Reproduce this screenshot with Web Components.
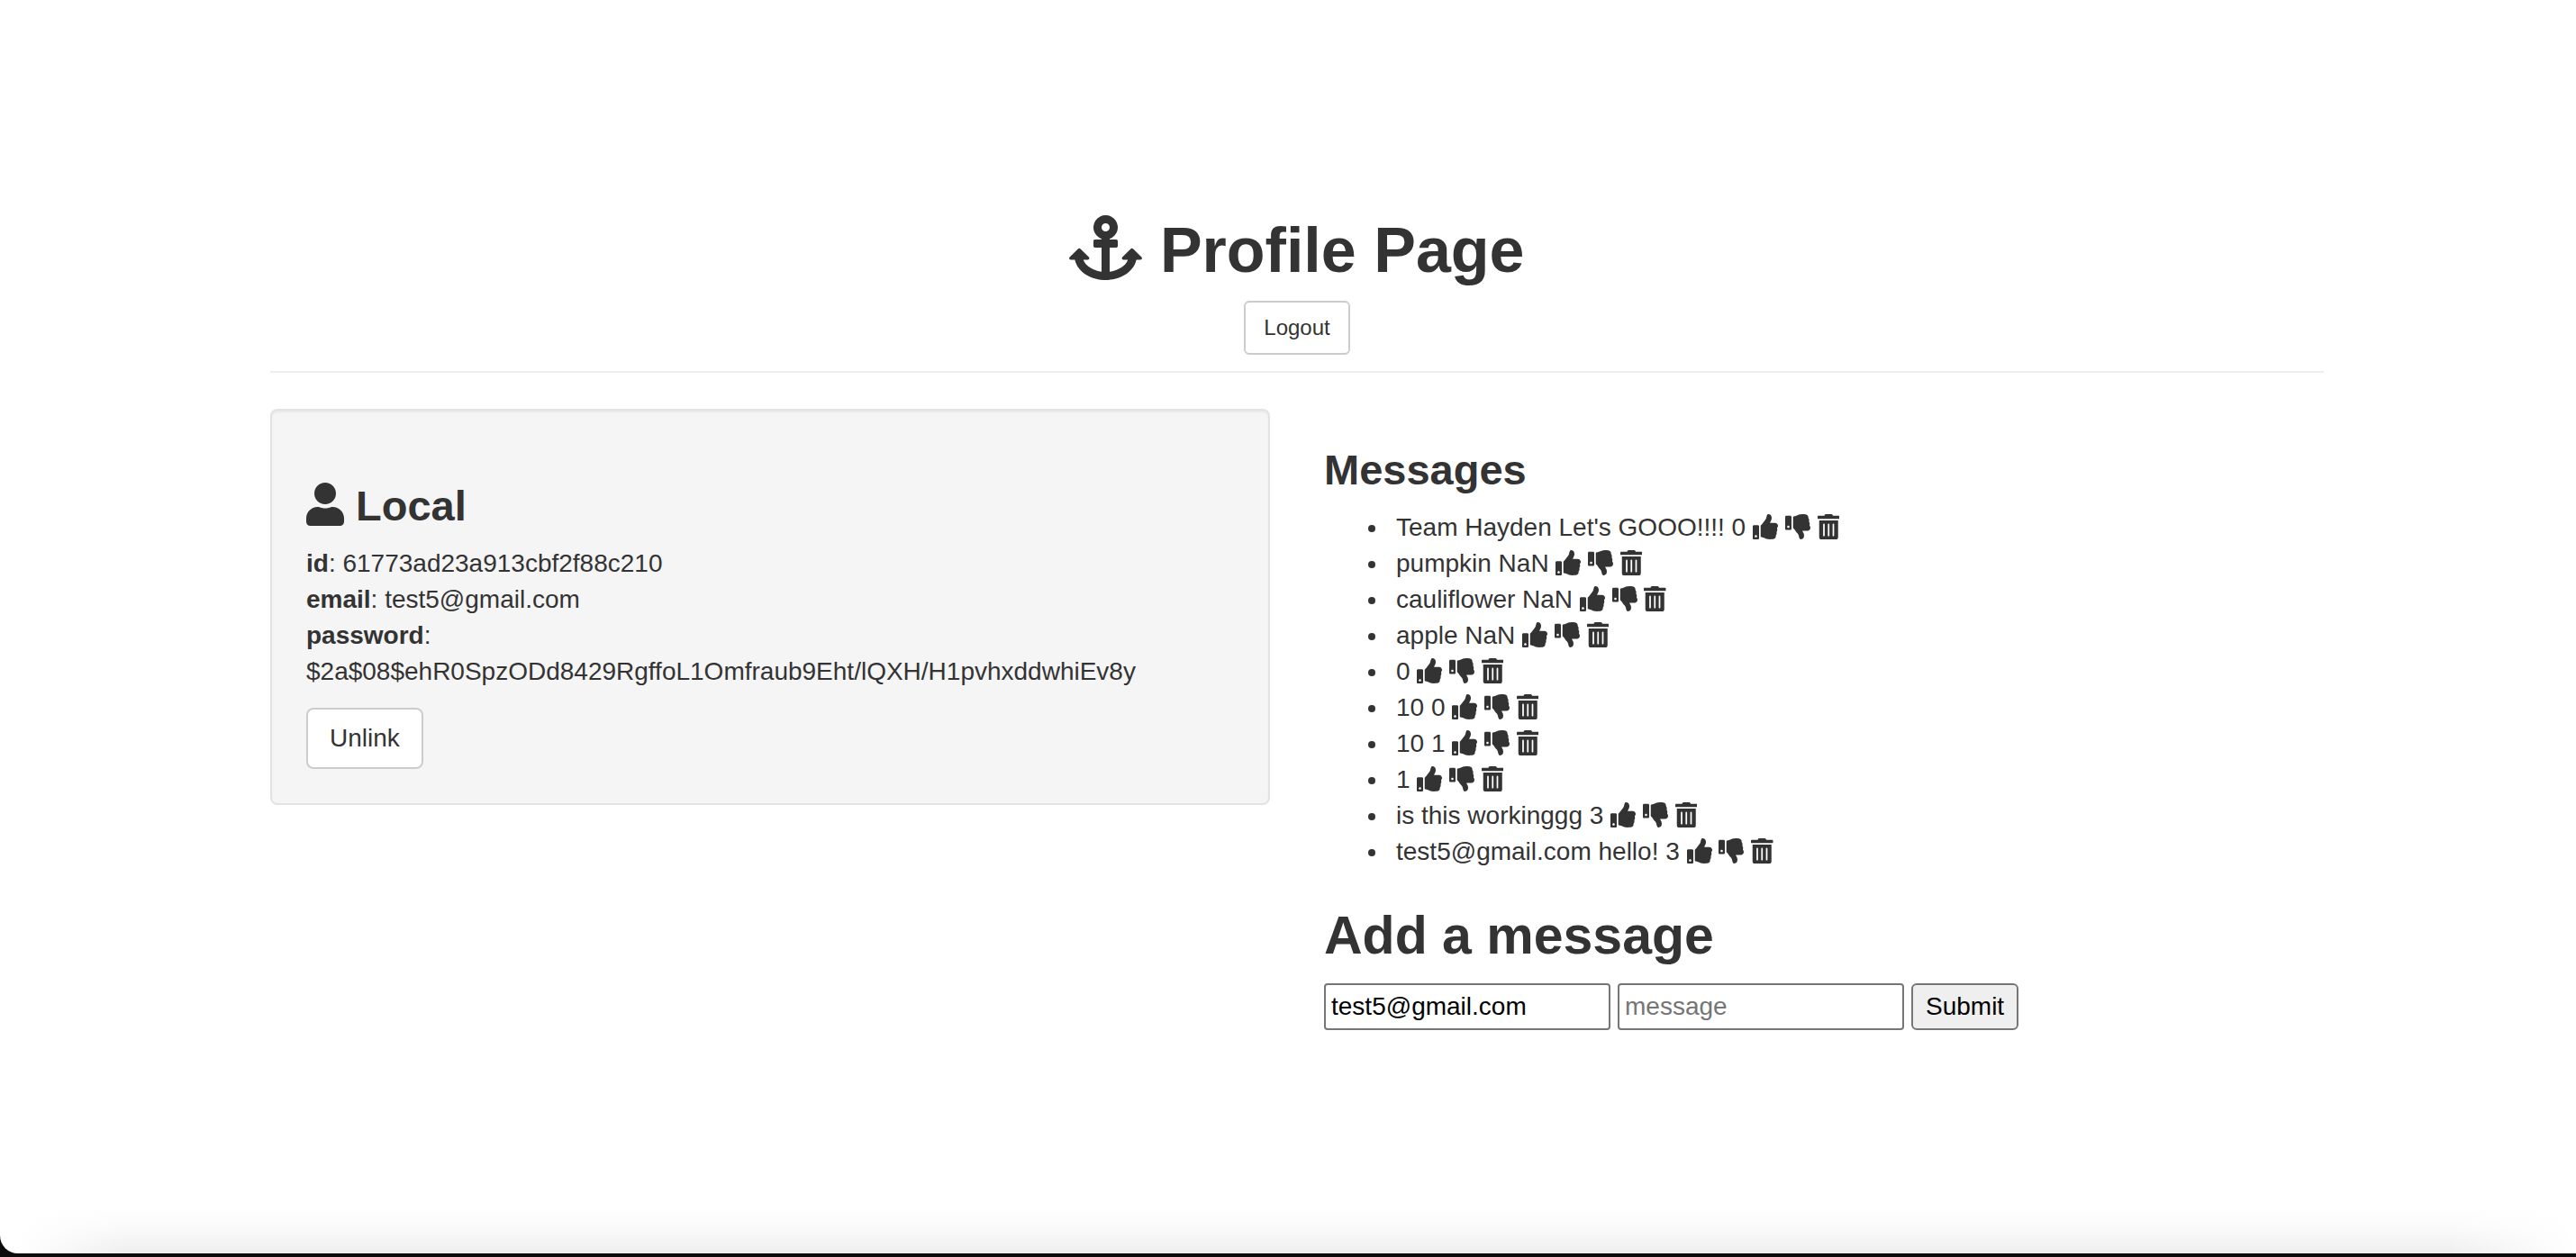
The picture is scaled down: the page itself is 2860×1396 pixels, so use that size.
<!DOCTYPE html>
<html lang="en">
<head>
<meta charset="utf-8">
<title>Profile Page</title>
<style>
html, body { margin: 0; }
body {
  background: #0c0c0c;
  color: #333;
  font: 28px/40px "Liberation Sans", Arial, sans-serif;
}
</style>
</head>
<body>
<app-window>
  <page-header icon="anchor">Profile Page</page-header>
  <split-row>
    <account-card></account-card>
    <message-board></message-board>
  </split-row>
</app-window>

<script>
const ICONS = {
  anchor: { w: 576, d: 'M12.971 352h32.394C67.172 454.735 181.944 512 288 512c106.229 0 220.853-57.38 242.635-160h32.394c10.691 0 16.045-12.926 8.485-20.485l-67.029-67.029c-4.686-4.686-12.284-4.686-16.971 0l-67.029 67.029c-7.56 7.56-2.206 20.485 8.485 20.485h35.146c-20.29 54.317-84.963 86.588-144.117 94.015V256h52c6.627 0 12-5.373 12-12v-40c0-6.627-5.373-12-12-12h-52v-5.47A96 96 0 1 0 256 186.53V192h-52c-6.627 0-12 5.373-12 12v40c0 6.627 5.373 12 12 12h52v190.015C196.847 438.588 132.174 406.317 111.885 352h35.146c10.691 0 16.045-12.926 8.485-20.485l-67.029-67.029c-4.686-4.686-12.284-4.686-16.971 0L4.486 331.515C-3.074 339.075 2.28 352 12.971 352zM288 64a32 32 0 1 1 0 64a32 32 0 1 1 0-64z' },
  user: { w: 448, d: 'M224 256c70.7 0 128-57.3 128-128S294.7 0 224 0 96 57.3 96 128s57.3 128 128 128zm89.6 32h-16.7c-22.2 10.2-46.9 16-72.9 16s-50.6-5.8-72.9-16h-16.7C60.2 288 0 348.2 0 422.4V464c0 26.5 21.5 48 48 48h352c26.5 0 48-21.5 48-48v-41.6c0-74.2-60.2-134.4-134.4-134.4z' },
  up: { w: 512, d: 'M104 224H24c-13.255 0-24 10.745-24 24v240c0 13.255 10.745 24 24 24h80c13.255 0 24-10.745 24-24V248c0-13.255-10.745-24-24-24zM64 472c-13.255 0-24-10.745-24-24s10.745-24 24-24 24 10.745 24 24-10.745 24-24 24zM384 81.452c0 42.416-25.97 66.208-33.277 94.548h101.723c33.397 0 59.397 27.746 59.553 58.098.084 17.938-7.546 37.249-19.439 49.197l-.11.11c9.836 23.337 8.237 56.037-9.308 79.469 8.681 25.895-.069 57.704-16.382 74.757 4.298 17.598 2.244 32.575-6.148 44.632C440.202 511.587 389.616 512 346.839 512l-2.845-.001c-48.287-.017-87.806-17.598-119.56-31.725-15.957-7.099-36.821-15.887-52.651-16.178-6.54-.12-11.783-5.457-11.783-11.998v-213.77c0-3.2 1.282-6.271 3.558-8.521 39.614-39.144 56.648-80.587 89.117-113.111 14.804-14.832 20.188-37.236 25.393-58.902C282.515 39.293 291.817 0 312 0c24 0 72 8 72 81.452z' },
  down: { w: 512, d: 'M0 56v240c0 13.255 10.745 24 24 24h80c13.255 0 24-10.745 24-24V56c0-13.255-10.745-24-24-24H24C10.745 32 0 42.745 0 56zm40 200c0-13.255 10.745-24 24-24s24 10.745 24 24-10.745 24-24 24-24-10.745-24-24zm272 256c-20.183 0-29.485-39.293-33.931-57.795-5.206-21.666-10.589-44.07-25.393-58.902-32.469-32.524-49.503-73.967-89.117-113.111a11.98 11.98 0 0 1-3.558-8.521V59.901c0-6.541 5.243-11.878 11.783-11.998 15.831-.29 36.694-9.079 52.651-16.178C256.189 17.598 295.709.017 343.995 0h2.844c42.777 0 93.363.413 113.774 29.737 8.392 12.057 10.446 27.034 6.148 44.632 16.312 17.053 25.063 48.863 16.382 74.757 17.544 23.432 19.143 56.132 9.308 79.469l.11.11c11.893 11.949 19.523 31.259 19.439 49.197-.156 30.352-26.157 58.098-59.553 58.098H350.723C358.03 364.34 384 388.132 384 430.548 384 504 336 512 312 512z' },
  trash: { w: 448, d: 'M32 464a48 48 0 0 0 48 48h288a48 48 0 0 0 48-48V128H32zm272-256a16 16 0 0 1 32 0v224a16 16 0 0 1-32 0zm-96 0a16 16 0 0 1 32 0v224a16 16 0 0 1-32 0zm-96 0a16 16 0 0 1 32 0v224a16 16 0 0 1-32 0zM432 32H312l-9.4-18.7A24 24 0 0 0 281.1 0H166.8a23.72 23.72 0 0 0-21.4 13.3L136 32H16A16 16 0 0 0 0 48v32a16 16 0 0 0 16 16h416a16 16 0 0 0 16-16V48a16 16 0 0 0-16-16z' }
};

const HEADINGS = `
  h2, h3 { font-weight: bold; }
  h2 { margin: 40px 0 20px; font-size: 59px; line-height: 66px; }
  h3 { margin: 42px 0 18px; font-size: 47px; line-height: 52px; }
`;

function define(name, render) {
  customElements.define(name, class extends HTMLElement {
    connectedCallback() {
      if (!this.shadowRoot) this.attachShadow({ mode: 'open' }).innerHTML = render(this);
    }
  });
}

define('fa-icon', el => {
  const icon = ICONS[el.getAttribute('name')];
  return `
    <style>
      :host { display: inline-block; height: var(--icon-size, 28px); vertical-align: var(--icon-drop, -4px); }
      svg { display: block; height: 100%; fill: currentColor; }
    </style>
    <svg viewBox="0 0 ${icon.w} 512" fill-rule="evenodd" aria-hidden="true"><path d="${icon.d}"/></svg>`;
});

define('app-window', () => `
  <style>
    :host {
      display: flex; flex-direction: column; box-sizing: border-box;
      min-height: 100vh; padding-bottom: 4px;
    }
    .surface {
      flex: 1; padding: 238px 0 60px 20px; border-bottom-left-radius: 20px; overflow: hidden;
      background:
        linear-gradient(to right, #fff 20px, transparent 140px, transparent calc(100% - 140px), #fff) bottom / 100% 60px no-repeat,
        linear-gradient(to top, #eee, #fafafa 28px, #fff 52px) #fff;
    }
    main { max-width: 2280px; margin: 0 auto; }
  </style>
  <div class="surface"><main><slot></slot></main></div>`);

define('page-header', el => `
  <style>
    :host {
      display: flex; flex-direction: column; align-items: center; gap: 16px;
      padding-bottom: 18px; border-bottom: 2px solid #eee;
    }
    h1 { margin: 0; font-size: 70px; line-height: 80px; font-weight: bold; }
    fa-icon { --icon-size: 72px; --icon-drop: -9px; }
  </style>
  <h1><fa-icon name="${el.getAttribute('icon')}"></fa-icon> <slot></slot></h1>
  <link-button size="small">Logout</link-button>`);

define('link-button', () => `
  <style>
    :host { display: inline-flex; }
    a {
      box-sizing: border-box; padding: 12px 24px; border: 2px solid #ccc; border-radius: 8px;
      background: #fff; color: #333; font-size: 28px; line-height: 40px; text-decoration: none;
    }
    :host([size="small"]) a { padding: 10px 20px; border-radius: 6px; font-size: 24px; line-height: 36px; }
  </style>
  <a href="#"><slot></slot></a>`);

define('split-row', () => `
  <style>
    :host { display: grid; grid-template-columns: 1fr 1fr; column-gap: 60px; align-items: start; padding-top: 40px; }
  </style>
  <slot></slot>`);

define('account-card', () => `
  <style>
    ${HEADINGS}
    :host {
      display: flow-root; box-sizing: border-box; padding: 38px;
      border: 2px solid #e3e3e3; border-radius: 8px; background: #f5f5f5;
      box-shadow: inset 0 2px 2px rgba(0, 0, 0, .05);
    }
    h3 fa-icon { --icon-size: 48px; --icon-drop: -6px; }
    p { margin: 0 0 20px; }
    link-button { display: flex; }
  </style>
  <h3><fa-icon name="user"></fa-icon> Local</h3>
  <p>
    <strong>id</strong>: 61773ad23a913cbf2f88c210<br>
    <strong>email</strong>: test5@gmail.com<br>
    <strong>password</strong>:<br>
    $2a$08$ehR0SpzODd8429RgffoL1Omfraub9Eht/lQXH/H1pvhxddwhiEv8y
  </p>
  <link-button>Unlink</link-button>`);

define('message-actions', () => `
  <style>
    :host { display: inline; }
    button { padding: 0; border: 0; background: none; color: inherit; font: inherit; line-height: 0; vertical-align: baseline; }
  </style>
  <button type="button" aria-label="Like"><fa-icon name="up"></fa-icon></button>
  <button type="button" aria-label="Dislike"><fa-icon name="down"></fa-icon></button>
  <button type="button" aria-label="Delete"><fa-icon name="trash"></fa-icon></button>`);

const MESSAGES = [
  "Team Hayden Let's GOOO!!!! 0", 'pumpkin NaN', 'cauliflower NaN', 'apple NaN', '0',
  '10 0', '10 1', '1', 'is this workinggg 3', 'test5@gmail.com hello! 3'
];

define('message-board', () => `
  <style>
    ${HEADINGS}
    :host { display: flow-root; }
    ul { margin: 0 0 20px; padding-left: 72px; }
    li { padding-left: 8px; }
  </style>
  <h3>Messages</h3>
  <ul>${MESSAGES.map(text => `<li>${text} <message-actions></message-actions></li>`).join('')}</ul>
  <h2>Add a message</h2>
  <message-form></message-form>`);

define('message-form', () => `
  <style>
    :host { display: block; }
    form { display: flex; gap: 8px; }
    input, button {
      box-sizing: border-box; height: 52px; margin: 0; border: 2px solid #767676;
      font: 28px "Liberation Sans", Arial, sans-serif; color: #000;
    }
    input { width: 318px; padding: 0 6px; border-radius: 4px; background: #fff; }
    input::placeholder { color: #757575; }
    button { padding: 0 14px; border-radius: 6px; background: #efefef; }
  </style>
  <form>
    <input type="text" name="name" value="test5@gmail.com" aria-label="Name">
    <input type="text" name="msg" placeholder="message" aria-label="Message">
    <button type="submit">Submit</button>
  </form>`);
</script>
</body>
</html>
